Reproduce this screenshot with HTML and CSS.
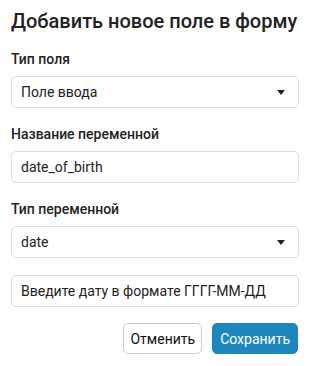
FILE: index.html
```html
<!DOCTYPE html>
<html lang="ru">
<head>
<meta charset="utf-8">
<link rel="stylesheet" href="styles.css">
</head>
<body>
<div class="dialog">
  <h1 class="title">Добавить новое поле в форму</h1>
  <div class="field">
    <label class="label">Тип поля</label>
    <div class="control select"><span>Поле ввода</span><span class="caret"></span></div>
  </div>
  <div class="field">
    <label class="label">Название переменной</label>
    <div class="control"><span>date_of_birth</span></div>
  </div>
  <div class="field">
    <label class="label">Тип переменной</label>
    <div class="control select"><span>date</span><span class="caret"></span></div>
  </div>
  <div class="field">
    <div class="control"><span>Введите дату в формате ГГГГ-ММ-ДД</span></div>
  </div>
  <div class="actions">
    <button class="btn btn-cancel">Отменить</button>
    <button class="btn btn-save">Сохранить</button>
  </div>
</div>
</body>
</html>
```
FILE: styles.css
```css
* { box-sizing: border-box; }
html, body { margin: 0; padding: 0; background: #fff; }
body { font-family: Roboto, "Noto Sans", sans-serif; color: #212121; }
.dialog { width: 312px; padding: 9px 13px 0 11px; display: flex; flex-direction: column; }
.title { margin: 0 0 17px; font-size: 20px; line-height: 24px; font-weight: 500; color: #222; white-space: nowrap; }
.field { display: flex; flex-direction: column; margin-bottom: 17px; }
.label { font-size: 14px; line-height: 19px; font-weight: 500; margin-bottom: 7px; color: #222; }
.control { height: 32px; border: 1px solid #dcdcdc; border-radius: 5px; padding: 0 9px; display: flex; align-items: center; justify-content: space-between; font-size: 14px; color: #222; }
.caret { width: 0; height: 0; border-left: 4px solid transparent; border-right: 4px solid transparent; border-top: 5px solid #222; margin-right: 4px; margin-top: 1px; }
.actions { display: flex; justify-content: flex-end; gap: 10px; margin-top: -1px; padding-right: 1px; }
.btn { height: 31px; font-family: Roboto, "Noto Sans", sans-serif; font-size: 14px; border-radius: 5px; padding: 0 6px; cursor: pointer; }
.btn-cancel { background: #fff; border: 1px solid #ccc; color: #111; }
.btn-save { background: #1d87bd; border: 1px solid #1d87bd; color: #fff; padding: 0 7px; }
```
